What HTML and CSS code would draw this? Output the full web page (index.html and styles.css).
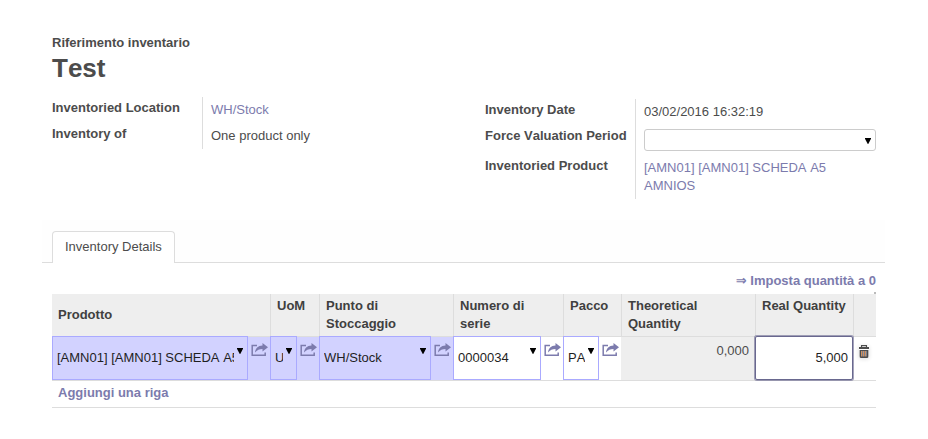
FILE: index.html
```html
<!DOCTYPE html>
<html lang="it">
<head>
<meta charset="utf-8">
<title>Test</title>
<link rel="stylesheet" href="styles.css">
</head>
<body>
<svg class="defs" width="0" height="0">
  <symbol id="share" viewBox="0 0 17 14">
    <path d="M6 2.500H1.200v9.800h13V9.600" fill="none" stroke="currentColor" stroke-width="1.500"/>
    <path d="M11.500 0l5.500 4.300-5.500 4.300V6C8.500 6 6 7 4 9.600 4.400 5.600 7 2.800 11.500 2.600z" fill="currentColor"/>
  </symbol>
</svg>
<main class="sheet">
  <header class="title">
    <label>Riferimento inventario</label>
    <h1>Test</h1>
  </header>
  <section class="groups">
    <div class="group group-left">
      <div class="labels"><span>Inventoried Location</span><span>Inventory of</span></div>
      <div class="values"><a>WH/Stock</a><span>One product only</span></div>
    </div>
    <div class="group group-right">
      <div class="labels"><span>Inventory Date</span><span class="tall">Force Valuation Period</span><span>Inventoried Product</span></div>
      <div class="values"><span>03/02/2016 16:32:19</span><div class="select"><i class="caret"></i></div><a>[AMN01] [AMN01] SCHEDA A5 AMNIOS</a></div>
    </div>
  </section>
  <nav class="tabs"><span class="tab">Inventory Details</span></nav>
  <section class="page">
    <div class="action"><a><span class="arrow">⇒</span> Imposta quantità a 0</a></div>
    <div class="row head">
      <div class="middle">Prodotto</div><div>UoM</div><div>Punto di Stoccaggio</div><div>Numero di serie</div><div>Pacco</div><div>Theoretical Quantity</div><div>Real Quantity</div><div></div>
    </div>
    <div class="row line">
      <div class="cell required"><div class="field"><span>[AMN01] [AMN01] SCHEDA A5</span><i class="caret"></i></div><svg class="share"><use href="#share"/></svg></div>
      <div class="cell required"><div class="field"><span>U</span><i class="caret"></i></div><svg class="share"><use href="#share"/></svg></div>
      <div class="cell required"><div class="field"><span>WH/Stock</span><i class="caret"></i></div><svg class="share"><use href="#share"/></svg></div>
      <div class="cell"><div class="field"><span>0000034</span><i class="caret"></i></div><svg class="share"><use href="#share"/></svg></div>
      <div class="cell"><div class="field"><span>PA</span><i class="caret"></i></div><svg class="share"><use href="#share"/></svg></div>
      <div class="readonly">0,000</div>
      <div class="focus">5,000</div>
      <div class="delete">
        <svg width="10" height="13" viewBox="0 0 10 13">
          <path d="M2.500 2V.6h5V2" fill="none" stroke="#4c4c4c" stroke-width="1.200"/>
          <path d="M0 2h10v2H0zM.6 5h8.800v8H.6z" fill="#4c4c4c"/>
          <path d="M2.500 6v5.500M4.500 6v5.500M6.500 6v5.500" stroke="#d0905f"/>
          <path d="M3.500 6v5.500M5.500 6v5.500M7.500 6v5.500" stroke="#7a7f8c"/>
        </svg>
      </div>
    </div>
    <div class="add"><a>Aggiungi una riga</a></div>
  </section>
</main>
</body>
</html>
```
FILE: styles.css
```css
* { box-sizing: border-box; }
body {
  margin: 0;
  background: #fff;
  color: #4c4c4c;
  font: 13px/18px "Liberation Sans", Arial, sans-serif;
  font-kerning: none;
}
.defs { display: block; }
a { color: #7c7bad; }
.sheet { width: 843px; margin-left: 42px; padding-top: 34px; }
.title { height: 63px; padding-left: 10px; font-weight: bold; }
.title label { display: block; }
h1 { margin: 1px 0 0; font-size: 26px; line-height: 30px; }
.groups { display: flex; height: 123px; padding-left: 10px; }
.group { display: flex; align-items: flex-start; }
.group-left { width: 433px; }
.group-right { width: 391px; padding-top: 2px; }
.labels { display: flex; flex-direction: column; gap: 8px; width: 150px; padding-top: 2px; font-weight: bold; white-space: nowrap; }
.labels .tall { height: 22px; }
.values { display: flex; flex-direction: column; gap: 8px; border-left: 1px solid #ddd; padding: 4px 0 4px 8px; }
.group-left .values { height: 52px; }
.group-right .values { width: 241px; height: 100px; }
.values .select { height: 22px; flex: none; border: 1px solid #ccc; border-radius: 3px; display: flex; justify-content: flex-end; padding: 8px 4px 0 0; }
.values a { width: 192px; }
.caret { width: 6px; height: 6px; background: #000; clip-path: polygon(0 0, 100% 0, 100% 12%, 54% 100%, 46% 100%, 0 12%); flex: none; }
.tabs { height: 43px; padding: 11px 0 0 10px; border-bottom: 1px solid #ddd; background: #fefefe; }
.tab { display: block; width: 123px; height: 32px; padding: 6px 12px 0; border: 1px solid #ddd; border-bottom: 0; border-radius: 4px 4px 0 0; background: #fff; white-space: nowrap; }
.page { padding: 9px 9px 0 10px; }
.action { height: 22px; text-align: right; font-weight: bold; }
.action::after { content: ""; display: block; width: 2px; height: 2px; margin: 2px 0 0 auto; background: #bbb; }
.arrow { font-family: "DejaVu Sans", sans-serif; line-height: 1; }
.row { display: grid; grid-template-columns: 218px 49px 134px 110px 58px 134px 98px 23px; }
.head { height: 42px; background: #eee; color: #404040; font-weight: bold; }
.head div { padding: 3px 6px; border-left: 1px solid #ddd; }
.head div:first-child { border-left: 0; }
.head .middle { padding-top: 12px; }
.line { height: 45px; border-bottom: 1px solid #ddd; }
.cell { display: flex; justify-content: space-between; min-width: 0; padding-right: 1px; border-top: 1px solid #ddd; }
.required { background: #d2d2ff; }
.field { display: flex; justify-content: space-between; flex: 1; min-width: 0; height: 44px; margin-top: -1px; margin-right: 3px; padding: 12px 4px 0; border: 1px solid #aaf; color: #1f1f1f; }
.field span { min-width: 0; overflow: hidden; white-space: nowrap; }
.field .caret { margin: -1px 0 0 3px; }
.share { width: 17px; height: 14px; margin-top: 6px; margin-right: 1px; color: #7c7bad; flex: none; }
.readonly { padding: 5px 6px 0 0; border-top: 1px solid #ddd; background: #eee; text-align: right; }
.focus { height: 44px; padding: 12px 4px 0 0; border: 1px solid #69688f; border-radius: 2px; box-shadow: 0 0 0 1px rgba(105, 104, 143, .6); background: #fff; color: #1f1f1f; text-align: right; z-index: 1; }
.delete { padding: 8px 0 0 6px; border-top: 1px solid #ddd; }
.delete svg { display: block; border-radius: 2px; box-shadow: 0 1px 4px #ddd; }
.add { height: 27px; padding: 3px 6px 0; border-bottom: 1px solid #ddd; font-weight: bold; }
```
